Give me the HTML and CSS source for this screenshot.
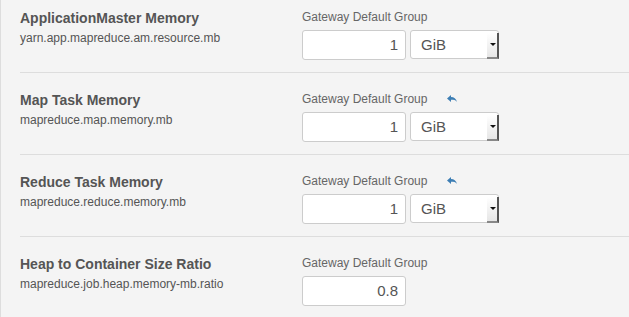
FILE: index.html
```html
<!DOCTYPE html>
<html lang="en">

<head>
    <meta charset="UTF-8">
    <title>Configuration</title>
    <link rel="stylesheet" href="styles.css">
</head>

<body>
    <div class="config-list">
        <div class="config-row">
            <div class="config-name">
                <h3>ApplicationMaster Memory</h3>
                <p>yarn.app.mapreduce.am.resource.mb</p>
            </div>
            <div class="config-value">
                <label>Gateway Default Group</label>
                <div class="controls">
                    <div class="num-input">1</div>
                    <div class="unit-select"><span>GiB</span><span class="caret"></span></div>
                </div>
            </div>
        </div>
        <div class="config-row">
            <div class="config-name">
                <h3>Map Task Memory</h3>
                <p>mapreduce.map.memory.mb</p>
            </div>
            <div class="config-value">
                <label>Gateway Default Group
                    <svg class="reset" width="10" height="8" viewBox="0 0 10 8"><path d="M0 3.5 L4 0 L4 2 C7 2 9 3.5 10 7 C8.5 5 7 4.8 4 4.8 L4 7 Z" fill="#3d7eb4"/></svg>
                </label>
                <div class="controls">
                    <div class="num-input">1</div>
                    <div class="unit-select"><span>GiB</span><span class="caret"></span></div>
                </div>
            </div>
        </div>
        <div class="config-row">
            <div class="config-name">
                <h3>Reduce Task Memory</h3>
                <p>mapreduce.reduce.memory.mb</p>
            </div>
            <div class="config-value">
                <label>Gateway Default Group
                    <svg class="reset" width="10" height="8" viewBox="0 0 10 8"><path d="M0 3.5 L4 0 L4 2 C7 2 9 3.5 10 7 C8.5 5 7 4.8 4 4.8 L4 7 Z" fill="#3d7eb4"/></svg>
                </label>
                <div class="controls">
                    <div class="num-input">1</div>
                    <div class="unit-select"><span>GiB</span><span class="caret"></span></div>
                </div>
            </div>
        </div>
        <div class="config-row">
            <div class="config-name">
                <h3>Heap to Container Size Ratio</h3>
                <p>mapreduce.job.heap.memory-mb.ratio</p>
            </div>
            <div class="config-value">
                <label>Gateway Default Group</label>
                <div class="controls">
                    <div class="num-input">0.8</div>
                </div>
            </div>
        </div>
    </div>
</body>

</html>
```
FILE: styles.css
```css
body {
    margin: 0;
    padding: 0;
    font-family: "Liberation Sans", Arial, sans-serif;
    background-color: #f4f4f4;
    overflow: hidden;
}

.config-list {
    border-left: 1px solid #ddd;
    background-color: #f4f4f4;
    margin-top: -10px;
    height: 340px;
}

.config-row {
    display: flex;
    margin-left: 19px;
    border-top: 1px solid #ddd;
    padding: 17px 0 12px 0;
    height: 52px;
}

.config-name {
    width: 282px;
}

.config-name h3 {
    margin: 0;
    font-size: 14px;
    line-height: 20px;
    font-weight: bold;
    color: #555;
}

.config-name p {
    margin: 0;
    font-size: 12px;
    line-height: 20px;
    color: #555;
}

.config-value label {
    display: block;
    font-size: 12px;
    line-height: 18px;
    color: #666;
    margin-bottom: 4px;
}

.reset {
    margin-left: 16px;
    vertical-align: 0;
}

.controls {
    display: flex;
}

.num-input {
    box-sizing: border-box;
    width: 104px;
    height: 30px;
    background-color: white;
    border: 1px solid #ccc;
    border-radius: 3px;
    padding: 0 7px;
    text-align: right;
    font-size: 15px;
    line-height: 28px;
    color: #555;
}

.unit-select {
    box-sizing: border-box;
    position: relative;
    width: 89px;
    height: 29px;
    margin-left: 4px;
    background-color: white;
    border: 1px solid #ccc;
    border-radius: 3px;
    padding-left: 10px;
    font-size: 15px;
    line-height: 27px;
    color: #555;
}

.unit-select .caret {
    position: absolute;
    right: -1px;
    top: 2px;
    width: 12px;
    height: 26px;
    border-right: 2px solid #555;
    border-bottom: 2px solid #888;
    box-sizing: border-box;
    background: linear-gradient(to bottom, #fff, #e6e6e6);
}

.unit-select .caret::after {
    content: "";
    position: absolute;
    left: 3px;
    top: 10px;
    border-left: 3px solid transparent;
    border-right: 3px solid transparent;
    border-top: 3px solid #111;
}
```
